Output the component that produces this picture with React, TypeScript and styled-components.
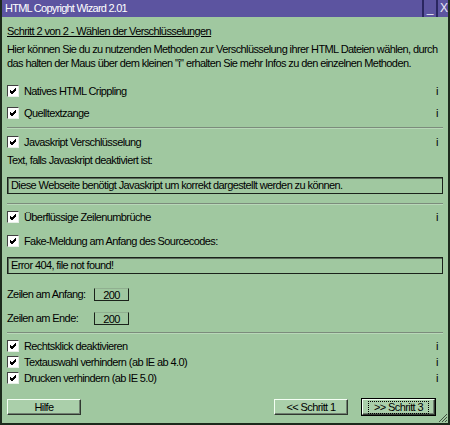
import React from "react";
import styled, { createGlobalStyle } from "styled-components";

const Global = createGlobalStyle`
  html, body { margin: 0; padding: 0; background: #a0c8a0; }
  body { font-family: "Liberation Sans", Arial, sans-serif; font-size: 11px; letter-spacing: -0.6px; color: #000; }
`;

const Window = styled.div`
  position: relative;
  width: 450px;
  height: 425px;
  box-sizing: border-box;
  background: #a0c8a0;
  border-left: 2px solid #1c2a1c;
  border-right: 2px solid #1c2a1c;
  border-bottom: 2px solid #1c2a1c;
  display: flex;
  flex-direction: column;
  overflow: hidden;
`;

const TitleBar = styled.div`
  height: 17px;
  margin: 0 -2px;
  background: #5c54a0;
  display: flex;
  align-items: stretch;
  color: #fff;
`;

const TitleText = styled.div`
  flex: 1;
  padding-left: 5px;
  font-size: 11px;
  letter-spacing: -0.75px;
  line-height: 17px;
  white-space: nowrap;
`;

const TitleButton = styled.div`
  width: 12px;
  border-left: 2px solid #2a2660;
  display: flex;
  align-items: center;
  justify-content: center;
  font-size: 12px;
  letter-spacing: 0;
  line-height: 17px;
  color: #e8e8f4;
`;

const Content = styled.div`
  padding: 0 5px;
  display: flex;
  flex-direction: column;
`;

const Heading = styled.div<{ $mt: number }>`
  margin-top: ${(p) => p.$mt}px;
  line-height: 14px;
  text-decoration: underline;
  white-space: nowrap;
`;

const Para = styled.div<{ $mt: number }>`
  margin-top: ${(p) => p.$mt}px;
  line-height: 14px;
  white-space: nowrap;
`;

const Row = styled.div<{ $mt: number }>`
  margin-top: ${(p) => p.$mt}px;
  height: 16px;
  display: flex;
  align-items: center;
  padding-right: 3px;
`;

const Box = styled.span`
  width: 12px;
  height: 12px;
  box-sizing: border-box;
  border-top: 1px solid #404040;
  border-left: 1px solid #404040;
  border-right: 1px solid #e8f0e8;
  border-bottom: 1px solid #e8f0e8;
  background: #fff;
  display: inline-flex;
  align-items: center;
  justify-content: center;
  margin-right: 5px;
  flex: none;
`;

const Label = styled.span`
  flex: 1;
  white-space: nowrap;
`;

const Info = styled.span`
  width: 6px;
  text-align: center;
`;

const Separator = styled.div<{ $mt: number }>`
  margin-top: ${(p) => p.$mt}px;
  height: 0;
  border-top: 1px solid #7c8c7c;
  border-bottom: 1px solid #b8d8b8;
`;

const TextField = styled.div<{ $mt: number }>`
  margin-top: ${(p) => p.$mt}px;
  height: 17px;
  box-sizing: border-box;
  border: 1px solid #1a221a;
  box-shadow: inset 1px 1px 0 #5a6a5a;
  padding-left: 3px;
  line-height: 15px;
  white-space: nowrap;
  overflow: hidden;
`;

const FieldLabel = styled.span`
  width: 87px;
  white-space: nowrap;
`;

const NumField = styled.span`
  width: 35px;
  height: 13px;
  box-sizing: border-box;
  border-left: 1px solid #1a221a;
  border-right: 1px solid #1a221a;
  border-bottom: 1px solid #1a221a;
  border-top: 1px solid #90b090;
  text-align: center;
  line-height: 12px;
`;

const ButtonRow = styled.div<{ $mt: number }>`
  margin-top: ${(p) => p.$mt}px;
  display: flex;
  align-items: center;
  padding-right: 8px;
`;

const Spacer = styled.div`
  flex: 1;
`;

const Button = styled.div<{ $default?: boolean; $ml?: number }>`
  width: ${(p) => (p.$default ? 73 : 74)}px;
  height: 16px;
  box-sizing: border-box;
  margin-left: ${(p) => p.$ml ?? 0}px;
  background: #aacfaa;
  border-top: 1px solid #f4fff4;
  border-left: 1px solid #f4fff4;
  border-right: 1px solid #303830;
  border-bottom: 1px solid #303830;
  box-shadow: ${(p) =>
    p.$default ? "0 0 0 1px #000, inset -1px -1px 0 #708070" : "inset -1px -1px 0 #708070"};
  display: flex;
  align-items: center;
  justify-content: center;
  line-height: 13px;
  white-space: nowrap;
`;

const Focus = styled.span`
  outline: 1px dotted #000;
  outline-offset: 0;
  padding: 0 5px;
  line-height: 11px;
`;

const Grip = styled.svg`
  position: absolute;
  right: 0;
  bottom: 0;
`;

const Check = () => (
  <svg width="8" height="8" viewBox="0 0 8 8">
    <path d="M1 3 L3 5 L7 1 M1 4 L3 6 L7 2 M1 5 L3 7 L7 3" stroke="#000" strokeWidth="1" fill="none" />
  </svg>
);

const CheckRow = ({ mt, label, info = true }: { mt: number; label: string; info?: boolean }) => (
  <Row $mt={mt}>
    <Box>
      <Check />
    </Box>
    <Label>{label}</Label>
    {info && <Info>i</Info>}
  </Row>
);

export default function App() {
  return (
    <>
      <Global />
      <Window>
        <TitleBar>
          <TitleText>HTML Copyright Wizard 2.01</TitleText>
          <TitleButton>_</TitleButton>
          <TitleButton>X</TitleButton>
        </TitleBar>
        <Content>
          <Heading $mt={7}>Schritt 2 von 2 - Wählen der Verschlüsselungen</Heading>
          <Para $mt={4}>
            Hier können Sie du zu nutzenden Methoden zur Verschlüsselung ihrer HTML Dateien wählen, durch
            <br />
            das halten der Maus über dem kleinen "i" erhalten Sie mehr Infos zu den einzelnen Methoden.
          </Para>
          <CheckRow mt={13} label="Natives HTML Crippling" />
          <CheckRow mt={6} label="Quelltextzange" />
          <Separator $mt={6} />
          <CheckRow mt={5} label="Javaskript Verschlüsselung" />
          <Para $mt={3}>Text, falls Javaskript deaktiviert ist:</Para>
          <TextField $mt={10}>Diese Webseite benötigt Javaskript um korrekt dargestellt werden zu können.</TextField>
          <Separator $mt={9} />
          <CheckRow mt={4} label="Überflüssige Zeilenumbrüche" />
          <CheckRow mt={8} label="Fake-Meldung am Anfang des Sourcecodes:" info={false} />
          <TextField $mt={8}>Error 404, file not found!</TextField>
          <Row $mt={12}>
            <FieldLabel>Zeilen am Anfang:</FieldLabel>
            <NumField>200</NumField>
          </Row>
          <Row $mt={8}>
            <FieldLabel>Zeilen am Ende:</FieldLabel>
            <NumField>200</NumField>
          </Row>
          <Separator $mt={6} />
          <CheckRow mt={4} label="Rechtsklick deaktivieren" />
          <CheckRow mt={0} label="Textauswahl verhindern (ab IE ab 4.0)" />
          <CheckRow mt={0} label="Drucken verhindern (ab IE 5.0)" />
          <ButtonRow $mt={13}>
            <Button>Hilfe</Button>
            <Spacer />
            <Button $default={false}>&lt;&lt; Schritt 1</Button>
            <Button $default $ml={14}>
              <Focus>&gt;&gt; Schritt 3</Focus>
            </Button>
          </ButtonRow>
        </Content>
        <Grip width="10" height="10" viewBox="0 0 10 10">
          <path d="M9 1 L1 9 M9 4 L4 9 M9 7 L7 9" stroke="#405040" strokeWidth="1" />
        </Grip>
      </Window>
    </>
  );
}
